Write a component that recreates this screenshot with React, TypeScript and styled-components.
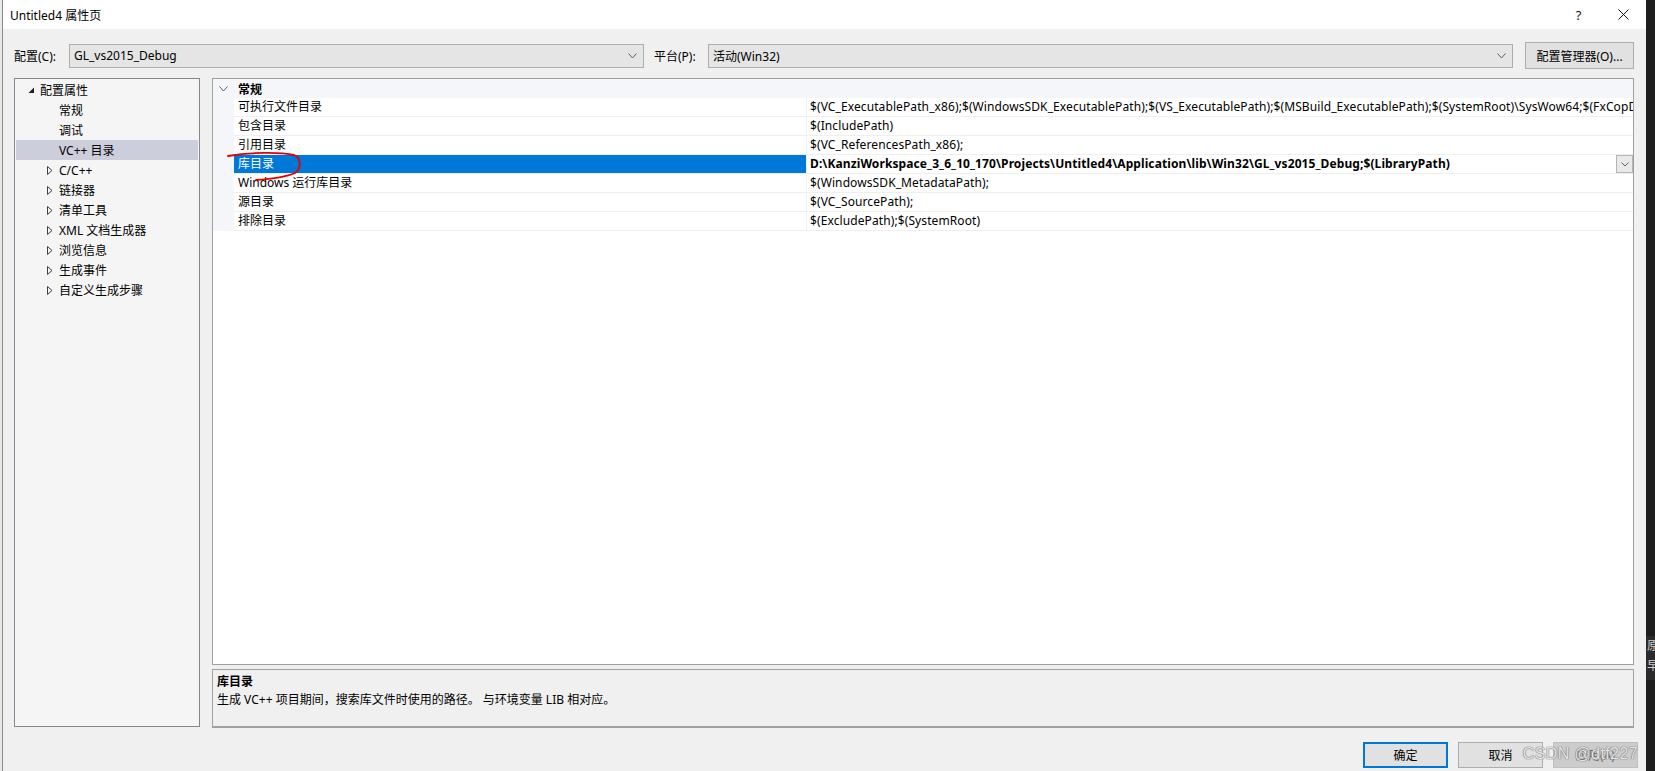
import React from 'react';
import styled, { createGlobalStyle } from 'styled-components';

const GlobalStyle = createGlobalStyle`
  html, body {
    margin: 0;
    padding: 0;
    background: #1e1e1e;
  }
  body {
    font-family: "Noto Sans", "Noto Sans CJK SC", sans-serif;
    font-size: 12px;
    color: #000;
  }
  * { box-sizing: border-box; }
`;

const Screen = styled.div`
  display: flex;
  width: 1655px;
  height: 771px;
  overflow: hidden;
`;

const LeftEdge = styled.div`
  width: 2px;
  background: #e9e9e9;
`;

const RightStrip = styled.div`
  width: 9px;
  background: #1e1e1e;
  display: flex;
  flex-direction: column;
  padding-top: 636px;
  overflow: hidden;
`;

const StripPanel = styled.div`
  height: 44px;
  background: #2b2b2b;
  color: #d0d0d0;
  font-size: 12px;
  line-height: 20px;
  padding-left: 1px;
  white-space: nowrap;
  overflow: hidden;
`;

const Dialog = styled.div`
  width: 1644px;
  border-left: 1px solid #8a8a8a;
  display: flex;
  flex-direction: column;
`;

const TitleBar = styled.div`
  height: 29px;
  background: #ffffff;
  display: flex;
  align-items: center;
  padding-left: 7px;
`;

const Title = styled.span`
  font-size: 12px;
`;

const TitleButtons = styled.div`
  margin-left: auto;
  display: flex;
  height: 100%;
`;

const TitleButton = styled.div`
  width: 45px;
  height: 100%;
  display: flex;
  align-items: center;
  justify-content: center;
  font-size: 13px;
  color: #111;
`;

const Body = styled.div`
  flex: 1;
  background: #f0f0f0;
  padding: 13px 12px 0 11px;
  display: flex;
  flex-direction: column;
`;

const ConfigRow = styled.div`
  height: 27px;
  display: flex;
  align-items: center;
`;

const FieldLabel = styled.span<{ $w: number; $gap?: number }>`
  width: ${p => p.$w}px;
  margin-left: ${p => p.$gap ?? 0}px;
  flex-shrink: 0;
  white-space: nowrap;
`;

const Combo = styled.div<{ $w?: number }>`
  ${p => (p.$w ? `width: ${p.$w}px; flex-shrink: 0;` : 'flex: 1;')}
  height: 24px;
  background: #e5e5e5;
  border: 1px solid #adadad;
  display: flex;
  align-items: center;
  padding: 0 6px 0 4px;
  justify-content: space-between;
`;

const ManagerButton = styled.button`
  margin-left: 12px;
  width: 109px;
  height: 27px;
  flex-shrink: 0;
  background: #e1e1e1;
  border: 1px solid #adadad;
  font: inherit;
  padding: 0;
  color: #000;
`;

const Main = styled.div`
  margin-top: 9px;
  display: flex;
  gap: 12px;
  height: 650px;
`;

const TreePanel = styled.div`
  width: 186px;
  height: 649px;
  background: #f5f5f5;
  border: 1px solid #828790;
  padding: 1px;
`;

const TreeRow = styled.div<{ $indent: number; $selected?: boolean }>`
  height: 20px;
  display: flex;
  align-items: center;
  padding-left: ${p => p.$indent}px;
  background: ${p => (p.$selected ? '#cccedb' : 'transparent')};
  white-space: nowrap;
`;

const Expander = styled.span`
  width: 12px;
  height: 20px;
  display: flex;
  align-items: center;
`;

const RightCol = styled.div`
  width: 1422px;
  display: flex;
  flex-direction: column;
  gap: 4px;
`;

const Grid = styled.div`
  position: relative;
  height: 587px;
  background: #ffffff;
  border: 1px solid #a0a0a0;
  overflow: hidden;
`;

const CategoryRow = styled.div`
  height: 19px;
  background: #f4f6f9;
  display: grid;
  grid-template-columns: 21px 1fr;
  align-items: center;
  font-weight: bold;
`;

const CategoryName = styled.span`
  padding-left: 4px;
`;

const Gutter = styled.div`
  height: 100%;
  display: flex;
  align-items: center;
  justify-content: center;
  background: #f4f6f9;
`;

const PropRow = styled.div`
  height: 19px;
  display: grid;
  grid-template-columns: 21px 572px 1fr;
`;

const LabelCell = styled.div<{ $selected?: boolean }>`
  border-bottom: 1px solid #efefef;
  background: ${p => (p.$selected ? '#0078d7' : '#ffffff')};
  color: ${p => (p.$selected ? '#ffffff' : '#000')};
  padding-left: 4px;
  line-height: 18px;
  white-space: nowrap;
  overflow: hidden;
`;

const ValueCell = styled.div<{ $bold?: boolean }>`
  border-bottom: 1px solid #efefef;
  border-left: 1px solid #efefef;
  padding-left: 3px;
  line-height: 18px;
  white-space: nowrap;
  overflow: hidden;
  display: flex;
  letter-spacing: 0.1px;
  font-weight: ${p => (p.$bold ? 'bold' : 'normal')};
`;

const ValueText = styled.span`
  flex: 1;
  overflow: hidden;
`;

const DropButton = styled.div`
  width: 17px;
  height: 18px;
  flex-shrink: 0;
  background: #e9e9e9;
  border: 1px solid #b4b4b4;
  display: flex;
  align-items: center;
  justify-content: center;
`;

const Annotation = styled.svg`
  position: absolute;
  left: 0;
  top: 0;
  width: 120px;
  height: 120px;
  pointer-events: none;
`;

const DescPanel = styled.div`
  height: 59px;
  background: #f0f0f0;
  border: 1px solid #a0a0a0;
  border-bottom-width: 2px;
  padding: 4px 4px 0 4px;
`;

const DescTitle = styled.div`
  font-weight: bold;
  line-height: 16px;
`;

const DescText = styled.div`
  line-height: 16px;
  margin-top: 2px;
`;

const ButtonRow = styled.div`
  position: relative;
  margin-top: 14px;
  margin-right: -4px;
  display: flex;
  justify-content: flex-end;
  gap: 10px;
`;

const DialogButton = styled.button<{ $primary?: boolean; $disabled?: boolean }>`
  width: 85px;
  height: 26px;
  padding: 0;
  font: inherit;
  font-size: 12px;
  background: ${p => (p.$disabled ? '#cccccc' : '#e1e1e1')};
  color: ${p => (p.$disabled ? '#6a6a6a' : '#000')};
  border: ${p => (p.$primary ? '2px solid #0078d7' : p.$disabled ? '1px solid #bfbfbf' : '1px solid #adadad')};
`;

const Watermark = styled.span`
  position: absolute;
  right: 0;
  top: 3px;
  font-family: "Liberation Sans", "Noto Sans CJK SC", sans-serif;
  font-size: 16px;
  letter-spacing: 0.4px;
  color: #e4e4e4;
  text-shadow: 0 0 1px #7c7c7c, 0 0 1px #7c7c7c, 0 0 1px #7c7c7c;
  pointer-events: none;
  white-space: nowrap;
`;

const Chevron = ({ w = 9, h = 5 }: { w?: number; h?: number }) => (
  <svg width={w} height={h + 1} viewBox={`0 0 ${w} ${h + 1}`}>
    <polyline points={`0.5,0.5 ${w / 2},${h} ${w - 0.5},0.5`} fill="none" stroke="#606060" strokeWidth="1" />
  </svg>
);

const OpenTriangle = () => (
  <svg width="7" height="7" viewBox="0 0 7 7">
    <polygon points="6,0.5 6,6 0.5,6" fill="#1e1e1e" />
  </svg>
);

const ClosedTriangle = () => (
  <svg width="6" height="9" viewBox="0 0 6 9">
    <polygon points="0.5,0.5 5,4.5 0.5,8.5" fill="none" stroke="#404040" strokeWidth="1" />
  </svg>
);

const CloseIcon = () => (
  <svg width="11" height="11" viewBox="0 0 11 11">
    <path d="M0.5,0.5 L10.5,10.5 M10.5,0.5 L0.5,10.5" stroke="#111" strokeWidth="1" />
  </svg>
);

const treeItems: { text: string; expandable: boolean; selected?: boolean }[] = [
  { text: '常规', expandable: false },
  { text: '调试', expandable: false },
  { text: 'VC++ 目录', expandable: false, selected: true },
  { text: 'C/C++', expandable: true },
  { text: '链接器', expandable: true },
  { text: '清单工具', expandable: true },
  { text: 'XML 文档生成器', expandable: true },
  { text: '浏览信息', expandable: true },
  { text: '生成事件', expandable: true },
  { text: '自定义生成步骤', expandable: true },
];

const props: { label: string; value: string; selected?: boolean }[] = [
  {
    label: '可执行文件目录',
    value:
      '$(VC_ExecutablePath_x86);$(WindowsSDK_ExecutablePath);$(VS_ExecutablePath);$(MSBuild_ExecutablePath);$(SystemRoot)\\SysWow64;$(FxCopDir);$(PATH);',
  },
  { label: '包含目录', value: '$(IncludePath)' },
  { label: '引用目录', value: '$(VC_ReferencesPath_x86);' },
  {
    label: '库目录',
    value: 'D:\\KanziWorkspace_3_6_10_170\\Projects\\Untitled4\\Application\\lib\\Win32\\GL_vs2015_Debug;$(LibraryPath)',
    selected: true,
  },
  { label: 'Windows 运行库目录', value: '$(WindowsSDK_MetadataPath);' },
  { label: '源目录', value: '$(VC_SourcePath);' },
  { label: '排除目录', value: '$(ExcludePath);$(SystemRoot)' },
];

export default function App() {
  return (
    <Screen>
      <GlobalStyle />
      <LeftEdge />
      <Dialog>
        <TitleBar>
          <Title>Untitled4 属性页</Title>
          <TitleButtons>
            <TitleButton>?</TitleButton>
            <TitleButton>
              <CloseIcon />
            </TitleButton>
          </TitleButtons>
        </TitleBar>
        <Body>
          <ConfigRow>
            <FieldLabel $w={55}>配置(C):</FieldLabel>
            <Combo $w={575}>
              <span>GL_vs2015_Debug</span>
              <Chevron />
            </Combo>
            <FieldLabel $w={54} $gap={10}>平台(P):</FieldLabel>
            <Combo>
              <span>活动(Win32)</span>
              <Chevron />
            </Combo>
            <ManagerButton>配置管理器(O)...</ManagerButton>
          </ConfigRow>

          <Main>
            <TreePanel>
              <TreeRow $indent={12}>
                <Expander>
                  <OpenTriangle />
                </Expander>
                配置属性
              </TreeRow>
              {treeItems.map(item => (
                <TreeRow key={item.text} $indent={31} $selected={item.selected}>
                  <Expander>{item.expandable && <ClosedTriangle />}</Expander>
                  {item.text}
                </TreeRow>
              ))}
            </TreePanel>

            <RightCol>
              <Grid>
                <CategoryRow>
                  <Gutter>
                    <Chevron w={9} h={5} />
                  </Gutter>
                  <CategoryName>常规</CategoryName>
                </CategoryRow>
                {props.map(p => (
                  <PropRow key={p.label}>
                    <Gutter />
                    <LabelCell $selected={p.selected}>{p.label}</LabelCell>
                    <ValueCell $bold={p.selected}>
                      <ValueText>{p.value}</ValueText>
                      {p.selected && (
                        <DropButton>
                          <Chevron w={8} h={4} />
                        </DropButton>
                      )}
                    </ValueCell>
                  </PropRow>
                ))}
                <Annotation viewBox="0 0 120 120">
                  <path
                    d="M15,77 C38,73 68,73 81,76 C89,79 88,90 82,94 C73,98 58,100 43,101"
                    fill="none"
                    stroke="#e30000"
                    strokeWidth="1.8"
                    strokeLinecap="round"
                  />
                </Annotation>
              </Grid>
              <DescPanel>
                <DescTitle>库目录</DescTitle>
                <DescText>生成 VC++ 项目期间，搜索库文件时使用的路径。 与环境变量 LIB 相对应。</DescText>
              </DescPanel>
            </RightCol>
          </Main>

          <ButtonRow>
            <DialogButton $primary>确定</DialogButton>
            <DialogButton>取消</DialogButton>
            <DialogButton $disabled>应用(A)</DialogButton>
            <Watermark>CSDN @dtf227</Watermark>
          </ButtonRow>
        </Body>
      </Dialog>
      <RightStrip>
        <StripPanel>
          原<br />
          早
        </StripPanel>
      </RightStrip>
    </Screen>
  );
}
